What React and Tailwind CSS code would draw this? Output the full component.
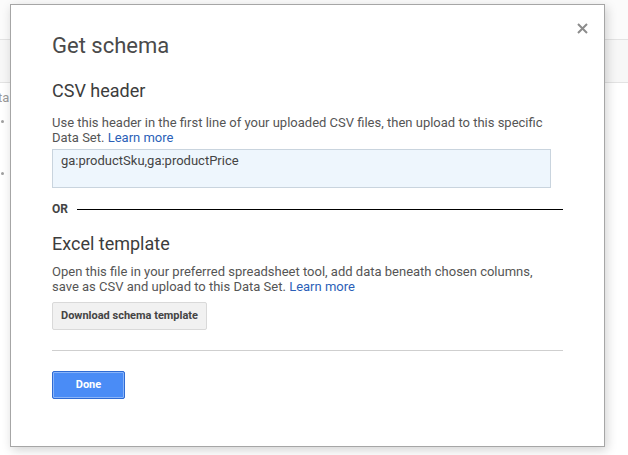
export default function App() {
  return (
    <div className="relative w-[628px] h-[455px] overflow-hidden bg-white" style={{ fontFamily: 'Roboto, "Liberation Sans", sans-serif' }}>
      {/* page behind the dialog */}
      <div className="h-[40px] bg-[#fbfbfb] border-b border-[#e3e3e3]" />
      <div className="h-[43px] bg-[#f7f7f7] border-b border-[#e3e3e3]" />
      <div className="relative h-[300px]">
        <div className="absolute left-[-2px] top-[7px] text-[13px] leading-[15px] text-[#9a9a9a]">ta</div>
        <div className="absolute left-[1px] top-[37px] w-[3px] h-[3px] rounded-full bg-[#a0a0a0]" />
        <div className="absolute left-[1px] top-[89px] w-[3px] h-[3px] rounded-full bg-[#a0a0a0]" />
      </div>

      {/* dialog */}
      <div className="absolute left-[10px] top-[4px] w-[595px] h-[443px] bg-white border border-[#a6a6a6] shadow-[2px_3px_10px_rgba(0,0,0,0.18)] pl-[41px] pr-[41px] pt-[27px]">
        <button className="absolute right-[16px] top-[18px] w-[11px] h-[11px] text-[#8c8c8c]">
          <svg viewBox="0 0 11 11" className="w-[11px] h-[11px]" stroke="currentColor" strokeWidth="2">
            <path d="M1 1L10 10M10 1L1 10" />
          </svg>
        </button>

        <h1 className="text-[22px] leading-[28px] text-[#4a4a4a]">Get schema</h1>

        <h2 className="mt-[19px] text-[18px] leading-[24px] text-[#3c3c3c]">CSV header</h2>
        <p className="mt-[12px] w-[499px] text-[13px] leading-[15px] text-[#555]">
          Use this header in the first line of your uploaded CSV files, then upload to this specific Data Set.{' '}
          <a className="text-[#2b5fb8]">Learn more</a>
        </p>
        <div className="mt-[4px] w-[499px] h-[39px] bg-[#eef6fd] border border-[#c9d4de] px-[8px] pt-[3px] text-[13px] leading-[15px] text-[#444]">
          ga:productSku,ga:productPrice
        </div>

        <div className="mt-[14px] flex items-center h-[14px]">
          <span className="text-[12px] leading-[14px] font-bold text-[#444]">OR</span>
          <div className="ml-[9px] flex-1 h-px bg-black" />
        </div>

        <h2 className="mt-[16px] text-[18px] leading-[24px] text-[#3c3c3c]">Excel template</h2>
        <p className="mt-[8px] w-[499px] text-[13px] leading-[15px] text-[#555]">
          Open this file in your preferred spreadsheet tool, add data beneath chosen columns, save as CSV and upload to this Data Set.{' '}
          <a className="text-[#2b5fb8]">Learn more</a>
        </p>
        <button className="mt-[8px] block h-[28px] px-[8px] bg-[#f1f1f1] border border-[#d9d9d9] rounded-[2px] text-[11px] font-bold text-[#444]">
          Download schema template
        </button>

        <div className="mt-[20px] h-px bg-[#cfcfcf]" />

        <button className="mt-[20px] block w-[73px] h-[28px] bg-[#4a8cf6] border border-[#2f6bd3] rounded-[2px] shadow-[inset_0_0_0_1px_rgba(255,255,255,0.35)] text-[11px] font-bold text-white">
          Done
        </button>
      </div>
    </div>
  );
}
